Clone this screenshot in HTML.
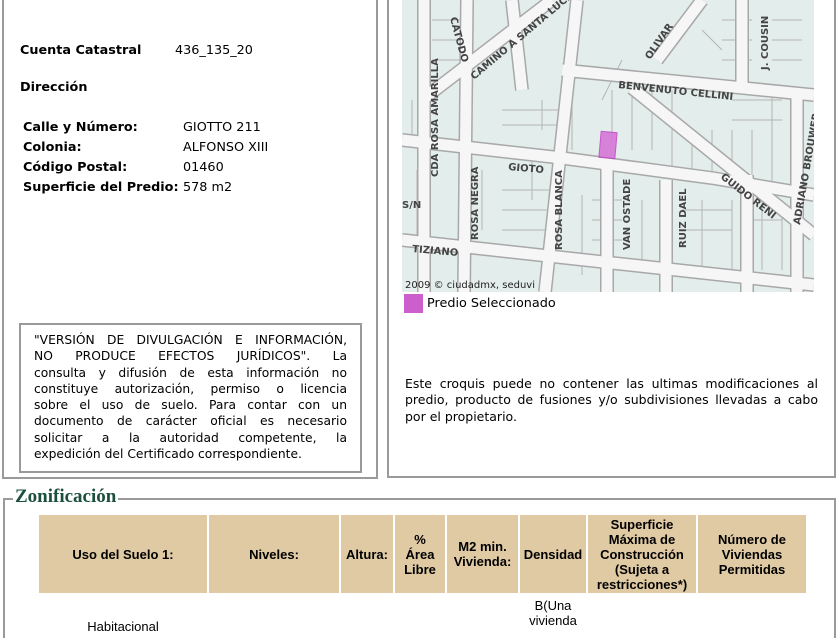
<!DOCTYPE html>
<html><head><meta charset="utf-8"><style>
*{margin:0;padding:0;box-sizing:border-box}
body{width:840px;height:630px;overflow:hidden;background:#fff;font-family:"DejaVu Sans",Verdana,sans-serif;font-size:12.8px;color:#000;position:relative}
.abs{position:absolute}
.box{position:absolute;border:2px solid #9a9a9a}
.j{text-align:justify;text-align-last:left}
.l{text-align:justify;text-align-last:justify;white-space:nowrap;font-size:12.3px}
table{border-collapse:separate;border-spacing:2px}
th{background:#dfcaa4;font-family:"Liberation Sans",Arial,sans-serif;font-size:13px;font-weight:bold;text-align:center;line-height:15px;padding:0}
</style></head><body>
<div class="box" style="left:2px;top:-4px;width:376px;height:483px;border-top:none"></div>
<div class="box" style="left:387px;top:-4px;width:449px;height:482px;border-top:none"></div>

<div class="abs" style="left:20px;top:43px;font-weight:bold">Cuenta Catastral</div>
<div class="abs" style="left:175px;top:43px">436_135_20</div>
<div class="abs" style="left:20px;top:80px;font-weight:bold">Dirección</div>
<div class="abs" style="left:23px;top:118px;font-weight:bold;line-height:20px">Calle y Número:<br>Colonia:<br>Código Postal:<br>Superficie del Predio:</div>
<div class="abs" style="left:183px;top:118px;line-height:20px">GIOTTO 211<br>ALFONSO XIII<br>01460<br>578 m2</div>

<div class="abs" style="left:19px;top:323px;width:343px;height:150px;border:2px solid #9a9a9a"></div>
<div class="abs" style="left:34px;top:332px;width:313px;line-height:16.3px">
<div class="l">"VERSIÓN DE DIVULGACIÓN E INFORMACIÓN,</div>
<div class="l">NO PRODUCE EFECTOS JURÍDICOS". La</div>
<div class="l">consulta y difusión de esta información no</div>
<div class="l">constituye autorización, permiso o licencia</div>
<div class="l">sobre el uso de suelo. Para contar con un</div>
<div class="l">documento de carácter oficial es necesario</div>
<div class="l">solicitar a la autoridad competente, la</div>
<div style="font-size:12.3px">expedición del Certificado correspondiente.</div>
</div>

<svg class="abs" style="left:402px;top:0" width="412" height="292" viewBox="0 0 412 292">
<rect width="412" height="292" fill="#e3edeb"/>
<g fill="none" stroke="#b5b5b5" stroke-width="1">
<path d="M30 20h40M30 40h40M30 60h40M100 110h60M100 125h60M100 190h50M100 210h50M100 230h50M140 100v30M60 170v60M80 170v60M130 160v40M170 90v60M210 90v50M230 90v60M250 80v70M270 90v80M290 130v50M310 130v50M330 130v50M350 130v50M370 90v100M390 90v100M240 200v70M260 200v70M300 200v70M330 200v70M360 200v70M380 200v70M15 170v70M320 20h30M320 40h30M320 60h30M370 20h30M370 40h30M370 60h30M10 100v40M180 195v80M190 200h30M190 220h30M190 240h30M280 210h50M280 230h50M340 220h40M200 100l20-40M300 30l20 20M330 100h50M330 120h50"/>
</g>
<g stroke="#a8a8a8" stroke-width="14" fill="none">
<path d="M0 140L160 158L310 178L412 195"/>
<path d="M160 70L412 95"/>
<path d="M230 88L412 235"/>
<path d="M22 0V292"/>
<path d="M65 0L62 292"/>
<path d="M175 0L143 292"/>
<path d="M205 168V292"/>
<path d="M264 180V292"/>
<path d="M345 175V292"/>
<path d="M395 90V292"/>
<path d="M0 240L412 285"/>
<path d="M20 100L150 0"/>
<path d="M255 60L300 0"/>
<path d="M340 90V0"/>
<path d="M120 90L110 0"/>
</g>
<g stroke="#f6f6f6" stroke-width="11" fill="none">
<path d="M0 140L160 158L310 178L412 195"/>
<path d="M160 70L412 95"/>
<path d="M230 88L412 235"/>
<path d="M22 0V292"/>
<path d="M65 0L62 292"/>
<path d="M175 0L143 292"/>
<path d="M205 168V292"/>
<path d="M264 180V292"/>
<path d="M345 175V292"/>
<path d="M395 90V292"/>
<path d="M0 240L412 285"/>
<path d="M20 100L150 0"/>
<path d="M255 60L300 0"/>
<path d="M340 90V0"/>
<path d="M120 90L110 0"/>
</g>
<rect x="198" y="132" width="16" height="26" fill="#d670d6" opacity="0.85" stroke="#c040c0" transform="rotate(5 206 145)"/>
<g font-family="DejaVu Sans,sans-serif" font-weight="bold" font-size="10" fill="#444">
<text x="216" y="88" transform="rotate(6 216 88)">BENVENUTO CELLINI</text>
<text x="106" y="170" transform="rotate(5 106 170)">GIOTO</text>
<text x="318" y="178" transform="rotate(38 318 178)">GUIDO RENI</text>
<text x="36" y="177" transform="rotate(-90 36 177)">CDA ROSA AMARILLA</text>
<text x="76" y="240" transform="rotate(-90 76 240)">ROSA NEGRA</text>
<text x="160" y="250" transform="rotate(-90 160 250)">ROSA BLANCA</text>
<text x="228" y="250" transform="rotate(-90 228 250)">VAN OSTADE</text>
<text x="284" y="248" transform="rotate(-90 284 248)">RUIZ DAEL</text>
<text x="398" y="225" transform="rotate(-80 398 225)">ADRIANO BROUWER</text>
<text x="366" y="70" transform="rotate(-90 366 70)">J. COUSIN</text>
<text x="248" y="60" transform="rotate(-55 248 60)">OLIVAR</text>
<text x="72" y="80" transform="rotate(-40 72 80)">CAMINO A SANTA LUCIA</text>
<text x="48" y="18" transform="rotate(75 48 18)">CATODO</text>
<text x="10" y="252" transform="rotate(5 10 252)">TIZIANO</text>
<text x="0" y="208">S/N</text>
</g>
<text x="3" y="288" font-family="DejaVu Sans,sans-serif" font-size="10" fill="#222">2009 © ciudadmx, seduvi</text>
</svg>
<div class="abs" style="left:404px;top:294px;width:19px;height:19px;background:#cc5fcc"></div>
<div class="abs" style="left:427px;top:296px">Predio Seleccionado</div>

<div class="abs j" style="left:405px;top:376px;width:413px;line-height:16.3px;font-size:12.5px">Este croquis puede no contener las ultimas modificaciones al predio, producto de fusiones y/o subdivisiones llevadas a cabo por el propietario.</div>

<div class="abs" style="left:3px;top:498px;width:833px;height:140px;border:2px solid #9a9a9a;border-bottom:none"></div>
<div class="abs" style="left:13px;top:486px;background:#fff;padding:0 2px;font-family:'Liberation Serif',serif;font-weight:bold;font-size:19px;color:#1c4f3f">Zonificación</div>

<table class="abs" style="left:37px;top:513px">
<tr style="height:78px">
<th style="width:168px">Uso del Suelo 1:</th>
<th style="width:130px">Niveles:</th>
<th style="width:52px">Altura:</th>
<th style="width:50px">%<br>Área<br>Libre</th>
<th style="width:71px">M2 min.<br>Vivienda:</th>
<th style="width:66px">Densidad</th>
<th style="width:108px">Superficie<br>Máxima de<br>Construcción<br>(Sujeta a<br>restricciones*)</th>
<th style="width:108px">Número de<br>Viviendas<br>Permitidas</th>
</tr></table>
<div class="abs" style="left:520px;top:598px;width:66px;text-align:center;font-family:'Liberation Sans',sans-serif;font-size:13px;line-height:15px">B(Una<br>vivienda</div>
<div class="abs" style="left:39px;top:619px;width:168px;text-align:center;font-family:'Liberation Sans',sans-serif;font-size:13px">Habitacional</div>
</body></html>
